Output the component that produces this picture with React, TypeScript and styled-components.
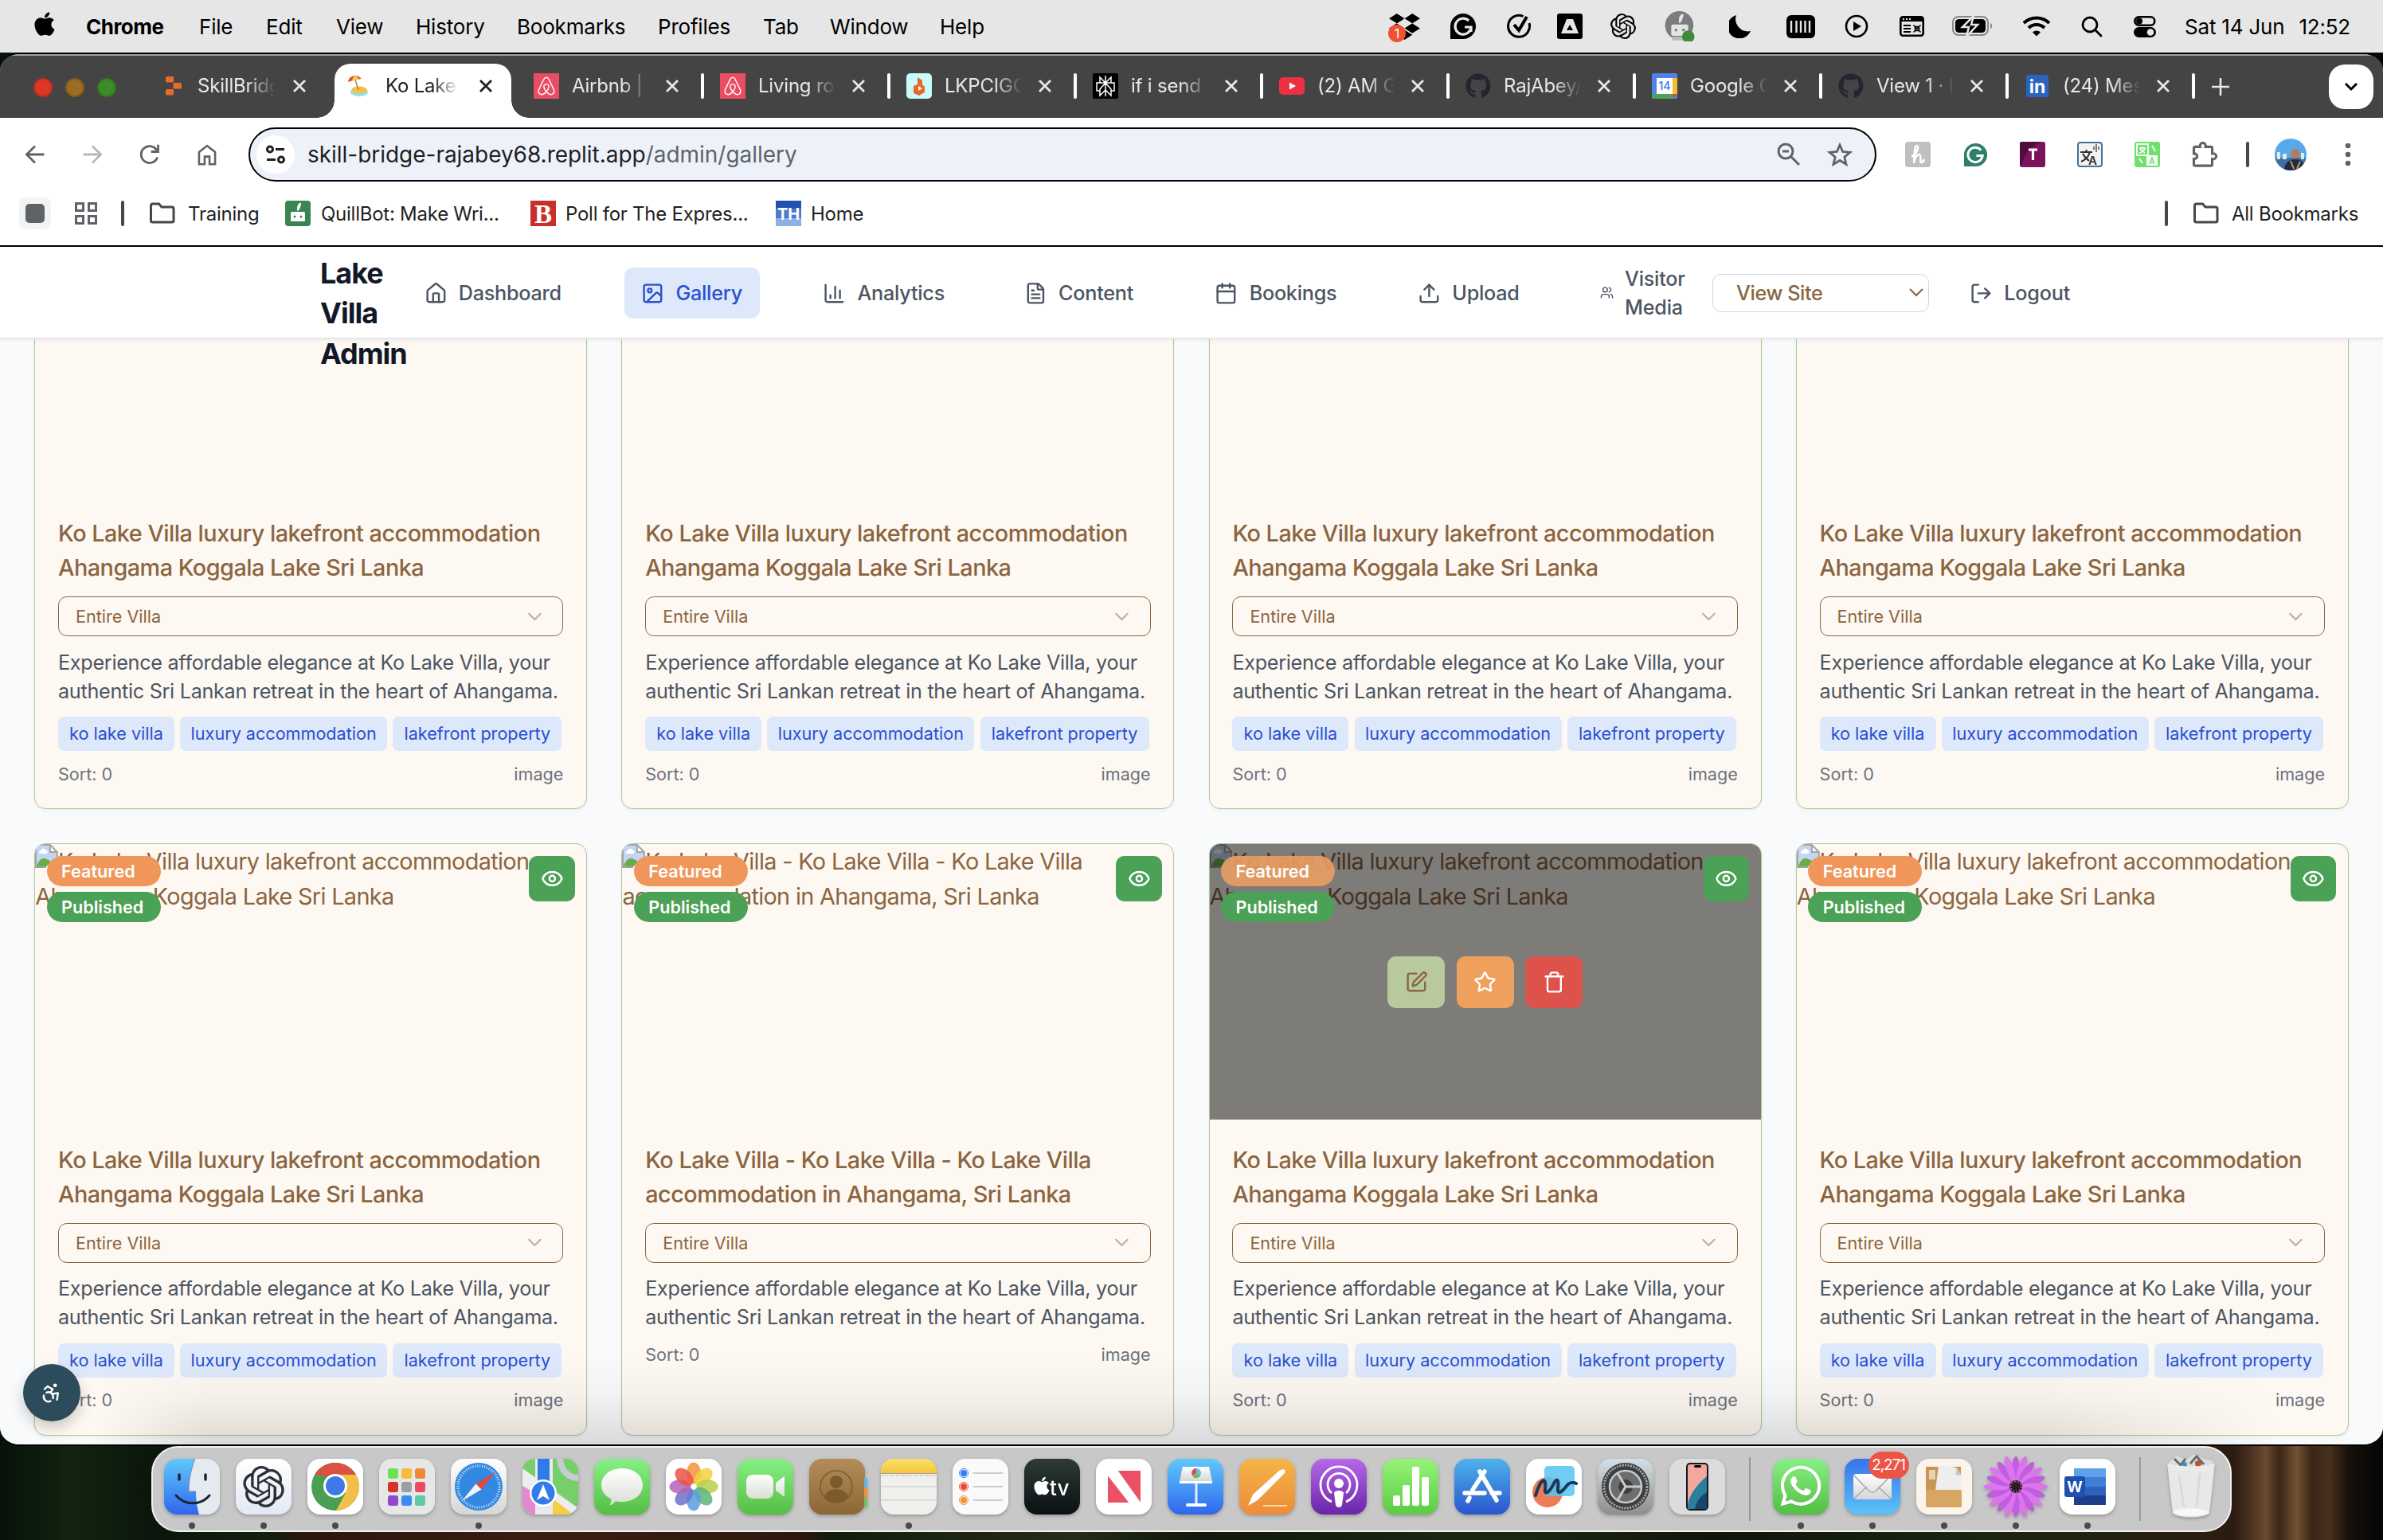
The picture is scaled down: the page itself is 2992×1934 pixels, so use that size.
import React from 'react';
import styled, { createGlobalStyle, css } from 'styled-components';
import {
  House, Image, ChartColumn, FileText, Calendar, Upload, Users, LogOut,
  SquarePen, Star, Trash, Eye, ChevronDown, Accessibility,
} from 'lucide-react';
import { FaApple, FaDropbox, FaAirbnb, FaGithub, FaWhatsapp } from 'react-icons/fa';

const Global = createGlobalStyle`
  * { box-sizing: border-box; }
  body { margin: 0; font-family: Inter, "Liberation Sans", sans-serif; }
`;

/* ---------- desktop ---------- */

const Desktop = styled.div`
  width: 2992px;
  height: 1934px;
  overflow: hidden;
  display: flex;
  flex-direction: column;
  background:
    linear-gradient(90deg, transparent 2780px, #2b1b10 2805px, #4a3020 2825px, #6b4a30 2845px, #3b2618 2862px, #755233 2884px, #3a2617 2902px, #46301d 2925px, #15100a 2950px, #050505 2992px),
    linear-gradient(90deg, #07110a 0, #12240f 90px, #0b160c 190px, #14200f 350px, #2c170d 380px, #3a1e12 700px, #2e180d 1010px, #121c0c 1040px, #232d18 1350px, #10190b 1500px, #1d2814 1900px, #0e160a 2150px, #1a2512 2500px, #2a1d10 2780px);
`;

const MenuBar = styled.div`
  flex: none;
  height: 66px;
  display: flex;
  align-items: center;
  padding: 0 34px 0 39px;
  background: #e6e6e6;
  color: #000;
  font-size: 26px;
  white-space: nowrap;
`;

const AppleMark = styled.div`
  width: 69px;
  font-size: 34px;
  height: 40px;
`;

const MenuItem = styled.div<{ $w: number; $bold?: boolean }>`
  width: ${(p) => p.$w}px;
  font-weight: ${(p) => (p.$bold ? 700 : 400)};
  letter-spacing: ${(p) => (p.$bold ? '-0.5px' : '-0.2px')};
`;

const Status = styled.div`
  margin-left: auto;
  display: flex;
  align-items: center;
`;

const StatusSlot = styled.div<{ $gap: number }>`
  width: 40px;
  height: 40px;
  margin-left: ${(p) => p.$gap}px;
  display: flex;
  align-items: center;
  justify-content: center;
  position: relative;
  svg { flex: none; }
`;

const DropBadge = styled.span`
  position: absolute;
  left: 0;
  top: 18px;
  width: 22px;
  height: 22px;
  border-radius: 50%;
  background: #ee5233;
  color: #fff;
  font-size: 16px;
  line-height: 22px;
  text-align: center;
`;

const Clock = styled.div`
  width: 215px;
  margin-left: 30px;
  display: flex;
  gap: 18px;
  letter-spacing: -0.2px;
`;

/* ---------- browser chrome ---------- */

const Window = styled.div`
  flex: none;
  height: 1750px;
  border-top: 2px solid #000;
  border-bottom: 2px solid #000;
  border-radius: 24px;
  overflow: hidden;
  display: flex;
  flex-direction: column;
  position: relative;
  background: #fff;
`;

const TabStrip = styled.div`
  flex: none;
  height: 80px;
  border-top: 2px solid #a3a39f;
  background: #444;
  display: flex;
  align-items: center;
  padding-left: 42px;
`;

const Lights = styled.div`
  display: flex;
  gap: 16px;
  width: 138px;
  padding-top: 2px;
`;

const Light = styled.span<{ $c: string; $b: string }>`
  width: 24px;
  height: 24px;
  border-radius: 50%;
  background: ${(p) => p.$c};
  border: 2px solid ${(p) => p.$b};
`;

const TabBox = styled.div<{ $w: number; $active?: boolean; $line?: boolean }>`
  width: ${(p) => p.$w}px;
  height: 68px;
  margin-top: 10px;
  padding: 0 0 12px 22px;
  display: flex;
  align-items: center;
  position: relative;
  color: #e8e8e8;
  ${(p) => p.$line && css`
    &::after {
      content: '';
      position: absolute;
      right: -2px;
      top: 12px;
      width: 4px;
      height: 32px;
      border-radius: 2px;
      background: #fff;
    }
  `}
  ${(p) => p.$active && css`
    margin: 10px 6px 0 6px;
    padding-left: 14px;
    background: #fff;
    color: #1f1f1f;
    border-radius: 20px 20px 0 0;
    &::before, &::after {
      content: '';
      position: absolute;
      bottom: 0;
      width: 22px;
      height: 22px;
    }
    &::before { left: -22px; background: radial-gradient(circle at 0 0, transparent 21.5px, #fff 22px); }
    &::after { right: -22px; background: radial-gradient(circle at 100% 0, transparent 21.5px, #fff 22px); }
  `}
`;

const Favicon = styled.div<{ $bg?: string; $r?: number; $c?: string }>`
  flex: none;
  width: 32px;
  height: 32px;
  display: flex;
  align-items: center;
  justify-content: center;
  background: ${(p) => p.$bg || 'transparent'};
  border-radius: ${(p) => p.$r || 0}px;
  color: ${(p) => p.$c || '#fff'};
  font-size: 26px;
`;

const TabText = styled.div<{ $ml?: number; $w?: number }>`
  width: ${(p) => p.$w || 94}px;
  margin-left: ${(p) => p.$ml ?? 16}px;
  overflow: hidden;
  white-space: nowrap;
  font-size: 24px;
  line-height: 34px;
  letter-spacing: -0.2px;
  mask-image: linear-gradient(90deg, #000 65%, transparent 102%);
`;

const Close = styled.svg<{ $mr: number }>`
  flex: none;
  width: 18px;
  height: 18px;
  margin-left: auto;
  margin-right: ${(p) => p.$mr}px;
`;

const NewTab = styled.div`
  width: 68px;
  display: flex;
  justify-content: center;
`;

const TabMenu = styled.div`
  width: 56px;
  height: 56px;
  margin-left: auto;
  margin-right: 12px;
  border-radius: 20px;
  background: #fff;
  display: flex;
  align-items: center;
  justify-content: center;
`;

const Toolbar = styled.div`
  flex: none;
  height: 80px;
  padding: 12px 0 0 8px;
  display: flex;
  align-items: center;
  background: #fff;
`;

const ToolSlot = styled.div<{ $w?: number }>`
  flex: none;
  width: ${(p) => p.$w || 72}px;
  display: flex;
  align-items: center;
  justify-content: center;
`;

const UrlBar = styled.div`
  flex: none;
  width: 2044px;
  height: 68px;
  margin: 0 16px 0;
  border: 2px solid #000;
  border-radius: 34px;
  background: #edf2fa;
  display: flex;
  align-items: center;
  padding: 0 12px 0 8px;
`;

const SiteInfo = styled.div`
  width: 48px;
  height: 48px;
  border-radius: 50%;
  background: #fff;
  display: flex;
  align-items: center;
  justify-content: center;
  margin-right: 16px;
`;

const UrlText = styled.div`
  flex: 1;
  font-size: 28px;
  letter-spacing: -0.03px;
  color: #1f1f1f;
  span { color: #5f6368; }
`;

const Avatar = styled.div`
  width: 40px;
  height: 40px;
  border-radius: 50%;
  overflow: hidden;
`;

const VLine = styled.i`
  width: 4px;
  height: 32px;
  border-radius: 2px;
  background: #474747;
`;

const BookmarkBar = styled.div`
  flex: none;
  height: 82px;
  border-bottom: 2px solid #000;
  display: flex;
  align-items: center;
  padding: 0 30px 0 24px;
  color: #1f1f1f;
  font-size: 24px;
  white-space: nowrap;
`;

const SquareButton = styled.div`
  width: 40px;
  height: 40px;
  border-radius: 8px;
  background: #f1f3f4;
  padding: 8px;
  &::before {
    content: '';
    display: block;
    width: 24px;
    height: 24px;
    border-radius: 5px;
    background: #5f6368;
  }
`;

const Bookmark = styled.div<{ $w: number; $gap?: number }>`
  width: ${(p) => p.$w}px;
  display: flex;
  align-items: center;
  gap: ${(p) => p.$gap || 13}px;
  letter-spacing: -0.25px;
`;

const Spacer = styled.div<{ $w?: number }>`
  flex: ${(p) => (p.$w ? `0 0 ${p.$w}px` : '1')};
`;

/* ---------- page ---------- */

const Viewport = styled.div`
  flex: 1;
  min-height: 0;
  overflow: hidden;
  background: #f9fafc;
`;

const Header = styled.header`
  position: relative;
  z-index: 2;
  height: 116px;
  padding: 2px 0 0 402px;
  background: #fff;
  border-bottom: 2px solid #e5e7eb;
  box-shadow: 0 2px 4px rgba(0, 0, 0, 0.05);
  display: flex;
  align-items: center;
`;

const Brand = styled.div`
  width: 109px;
  height: 100px;
  font-weight: 700;
  font-size: 36px;
  line-height: 50.4px;
  letter-spacing: -1px;
  color: #111827;
`;

const Nav = styled.nav`
  display: flex;
  align-items: center;
  gap: 57.6px;
`;

const NavItem = styled.a<{ $w: number; $active?: boolean }>`
  width: ${(p) => p.$w}px;
  height: 64.8px;
  padding-left: 21.6px;
  border-radius: 10.8px;
  display: flex;
  align-items: center;
  gap: 14.4px;
  font-size: 25.2px;
  line-height: 36px;
  font-weight: 500;
  letter-spacing: -0.25px;
  background: ${(p) => (p.$active ? '#dde8fb' : 'transparent')};
  color: ${(p) => (p.$active ? '#2a4fd0' : '#4b5563')};
  svg { flex: none; }
`;

const SiteSelect = styled.div`
  width: 272px;
  height: 48px;
  margin-left: 19px;
  border: 1.5px solid #d1d5db;
  border-radius: 10.8px;
  display: flex;
  align-items: center;
  justify-content: space-between;
  padding: 0 6px 0 29px;
  font-size: 25.2px;
  font-weight: 500;
  letter-spacing: -0.4px;
  color: #8b6541;
`;

const LogoutLink = styled.div`
  margin-left: 51px;
  display: flex;
  align-items: center;
  gap: 14.4px;
  font-size: 25.2px;
  font-weight: 500;
  letter-spacing: -0.2px;
  color: #4b5563;
`;

const Gallery = styled.main`
  margin-top: -153.4px;
  padding: 0 43.2px;
  display: grid;
  grid-template-columns: repeat(4, 1fr);
  gap: 43.2px;
`;

const Card = styled.article`
  border: 1.5px solid #b0c898;
  border-radius: 14px;
  background: #fdf8f1;
  overflow: hidden;
  box-shadow: 0 2px 4px rgba(0, 0, 0, 0.05);
`;

const Photo = styled.div`
  position: relative;
  height: 345.6px;
  color: #8b6541;
  font-size: 28.8px;
  line-height: 43.2px;
  letter-spacing: -0.65px;
  white-space: nowrap;
  svg { vertical-align: top; }
`;

const Shade = styled.div`
  position: absolute;
  inset: 0;
  background: rgba(0, 0, 0, 0.5);
  display: flex;
  align-items: center;
  justify-content: center;
  gap: 14.4px;
`;

const Action = styled.button<{ $bg: string; $c?: string }>`
  width: 72px;
  height: 64.8px;
  border: 0;
  border-radius: 10.8px;
  background: ${(p) => p.$bg};
  color: ${(p) => p.$c || '#fff'};
  display: flex;
  align-items: center;
  justify-content: center;
  padding: 0;
`;

const Badges = styled.div`
  position: absolute;
  left: 14.4px;
  top: 14.4px;
  width: 143px;
  display: flex;
  flex-direction: column;
  gap: 7.2px;
`;

const Badge = styled.span<{ $bg: string }>`
  height: 38px;
  border-radius: 19px;
  padding-left: 18.5px;
  background: ${(p) => p.$bg};
  color: #fff;
  font-size: 21.6px;
  line-height: 38px;
  font-weight: 600;
  letter-spacing: 0;
`;

const EyeButton = styled.button`
  position: absolute;
  right: 14.4px;
  top: 14.4px;
  width: 57.6px;
  height: 57.6px;
  border: 0;
  padding: 0;
  border-radius: 10.8px;
  background: #4ba155;
  color: #fff;
  display: flex;
  align-items: center;
  justify-content: center;
`;

const Body = styled.div`
  padding: 28.8px;
  display: flex;
  flex-direction: column;
  gap: 14.4px;
`;

const Title = styled.h3`
  margin: 0;
  font-size: 28.8px;
  line-height: 43.2px;
  font-weight: 500;
  letter-spacing: -0.5px;
  color: #8b6541;
  white-space: nowrap;
`;

const Category = styled.div`
  height: 50.4px;
  border: 1.5px solid #8b6541;
  border-radius: 10.8px;
  display: flex;
  align-items: center;
  justify-content: space-between;
  padding: 0 21px;
  font-size: 21.6px;
  color: #8b6541;
  svg { opacity: 0.5; }
`;

const Description = styled.p`
  margin: 0;
  font-size: 25.2px;
  line-height: 36px;
  letter-spacing: -0.29px;
  color: #4b5563;
  white-space: nowrap;
`;

const Tags = styled.div`
  display: flex;
  gap: 7.2px;
`;

const Tag = styled.span<{ $w: number }>`
  width: ${(p) => p.$w}px;
  height: 43.2px;
  border-radius: 7.2px;
  background: #dde8fb;
  color: #2a4fd0;
  font-size: 21.6px;
  line-height: 43.2px;
  text-align: center;
  white-space: nowrap;
`;

const Meta = styled.div`
  display: flex;
  justify-content: space-between;
  font-size: 21.6px;
  line-height: 28.8px;
  color: #6b7280;
`;

const DockGlow = styled.div`
  position: absolute;
  left: 120px;
  right: 130px;
  bottom: 0;
  height: 110px;
  background: linear-gradient(180deg, rgba(0, 0, 0, 0), rgba(0, 0, 0, 0.03) 45%, rgba(0, 0, 0, 0.125));
  mask-image: linear-gradient(90deg, transparent, #000 140px, #000 calc(100% - 300px), transparent);
  z-index: 3;
`;

const A11yButton = styled.div`
  position: absolute;
  left: 28.8px;
  bottom: 28.8px;
  width: 72px;
  height: 72px;
  border-radius: 50%;
  background: #2c4b5b;
  color: #fff;
  display: flex;
  align-items: center;
  justify-content: center;
  box-shadow: 0 8px 18px rgba(0, 0, 0, 0.2);
  z-index: 4;
`;

/* ---------- dock ---------- */

const Dock = styled.div`
  width: 2612px;
  height: 108px;
  margin-left: 190px;
  border: 2.5px solid #f1f1f1;
  border-radius: 34px;
  background: #c8c8c8;
  display: flex;
  padding: 14px 13.5px 0;
`;

const DockSlot = styled.div`
  flex: none;
  width: 70px;
  margin-right: 20px;
  position: relative;
  display: flex;
  flex-direction: column;
  align-items: center;
  svg { overflow: visible; display: block; filter: drop-shadow(0 2px 2px rgba(0, 0, 0, 0.25)); }
`;

const RunningDot = styled.i`
  width: 8px;
  height: 8px;
  margin-top: 10px;
  border-radius: 50%;
  background: #4a4a4a;
`;

const DockLine = styled.div`
  flex: none;
  width: 2px;
  height: 80px;
  margin: -2px 28px 0 10px;
  background: #9a9a9a;
`;

const MailBadge = styled.span`
  position: absolute;
  right: -11px;
  top: -9px;
  width: 51px;
  height: 34px;
  border-radius: 17px;
  background: #ec5545;
  color: #fff;
  font-size: 19px;
  line-height: 34px;
  text-align: center;
  letter-spacing: -1.1px;
`;

const OPENAI = 'M22.2819 9.8211a5.9847 5.9847 0 0 0-.5157-4.9108 6.0462 6.0462 0 0 0-6.5098-2.9A6.0651 6.0651 0 0 0 4.9807 4.1818a5.9847 5.9847 0 0 0-3.9977 2.9 6.0462 6.0462 0 0 0 .7427 7.0966 5.98 5.98 0 0 0 .511 4.9107 6.051 6.051 0 0 0 6.5146 2.9001A5.9847 5.9847 0 0 0 13.2599 24a6.0557 6.0557 0 0 0 5.7718-4.2058 5.9894 5.9894 0 0 0 3.9977-2.9001 6.0557 6.0557 0 0 0-.7475-7.0729zm-9.022 12.6081a4.4755 4.4755 0 0 1-2.8764-1.0408l.1419-.0804 4.7783-2.7582a.7948.7948 0 0 0 .3927-.6813v-6.7369l2.02 1.1686a.071.071 0 0 1 .038.052v5.5826a4.504 4.504 0 0 1-4.4945 4.4944zm-9.6607-4.1254a4.4708 4.4708 0 0 1-.5346-3.0137l.142.0852 4.783 2.7582a.7712.7712 0 0 0 .7806 0l5.8428-3.3685v2.3324a.0804.0804 0 0 1-.0332.0615L9.74 19.9502a4.4992 4.4992 0 0 1-6.1408-1.6464zM2.3408 7.8956a4.485 4.485 0 0 1 2.3655-1.9728V11.6a.7664.7664 0 0 0 .3879.6765l5.8144 3.3543-2.0201 1.1685a.0757.0757 0 0 1-.071 0l-4.8303-2.7865A4.504 4.504 0 0 1 2.3408 7.872zm16.5963 3.8558L13.1038 8.364 15.1192 7.2a.0757.0757 0 0 1 .071 0l4.8303 2.7913a4.4944 4.4944 0 0 1-.6765 8.1042v-5.6772a.79.79 0 0 0-.407-.667zm2.0107-3.0231l-.142-.0852-4.7735-2.7818a.7759.7759 0 0 0-.7854 0L9.409 9.2297V6.8974a.0662.0662 0 0 1 .0284-.0615l4.8303-2.7866a4.4992 4.4992 0 0 1 6.6802 4.66zM8.3065 12.863l-2.02-1.1638a.0804.0804 0 0 1-.038-.0567V6.0742a4.4992 4.4992 0 0 1 7.3757-3.4537l-.142.0805L8.704 5.459a.7948.7948 0 0 0-.3927.6813zm1.0976-2.3654l2.602-1.4998 2.6069 1.4998v2.9994l-2.5974 1.4997-2.6067-1.4997Z';

/* ---------- menu bar icons ---------- */

const Robot = ({ fill, eye }: { fill: string; eye: string }) => (
  <g>
    <path d="M17 4c2-2 3-1 3 0-1 5-2 7-4 9l-1-1c0-3 0-6 2-8z" fill={fill} />
    <rect x="7" y="14" width="18" height="12" rx="1.5" fill={fill} />
    <circle cx="12" cy="20" r="1.5" fill={eye} /><circle cx="20" cy="20" r="1.5" fill={eye} />
  </g>
);

const STATUS: { gap: number; icon: React.ReactNode }[] = [
  { gap: 0, icon: <><FaDropbox size={39} /><DropBadge>1</DropBadge></> },
  { gap: 34, icon: <svg width="32" height="32" viewBox="0 0 32 32"><path d="M16 0a16 16 0 1 1 0 32H0V16A16 16 0 0 1 16 0z" /><path d="M23 9a10 10 0 1 0 3 8h-8M26 17v6" fill="none" stroke="#e6e6e6" strokeWidth="3.2" /></svg> },
  { gap: 30, icon: <svg width="32" height="32" viewBox="0 0 32 32" fill="none" stroke="#000" strokeWidth="3"><path d="M21.500 3.500A13.500 13.500 0 1 0 29 12" /><path d="M10 14l6 7L26 4" strokeWidth="4" /></svg> },
  { gap: 24, icon: <svg width="32" height="32" viewBox="0 0 32 32"><rect width="32" height="32" rx="3" /><path d="M12 7h8l7 18H5z" fill="#e6e6e6" /><path d="M16 14l4 7h-8z" /></svg> },
  { gap: 27, icon: <svg width="32" height="32" viewBox="0 0 24 24"><path d={OPENAI} /></svg> },
  { gap: 31, icon: <svg width="38" height="38" viewBox="0 0 32 32"><circle cx="15.5" cy="15" r="15" fill="#7c7c7c" /><Robot fill="#e4e4e4" eye="#7c7c7c" /><rect x="8" y="27" width="12" height="4" fill="#bbb" /><circle cx="25" cy="27" r="6.6" fill="#3f8a3a" /></svg> },
  { gap: 36, icon: <svg width="28" height="30" viewBox="0 0 28 30"><path d="M9 1A15 15 0 1 0 27 21 15.500 15.500 0 0 1 9 1z" /></svg> },
  { gap: 36, icon: <svg width="36" height="29" viewBox="0 0 36 29"><rect width="36" height="29" rx="6" /><path d="M6 7v15M12.500 7v15M18 7v15M23.500 7v15M29 7v15" stroke="#e6e6e6" strokeWidth="2.400" /></svg> },
  { gap: 30, icon: <svg width="30" height="30" viewBox="0 0 30 30"><circle cx="15" cy="15" r="13" fill="none" stroke="#000" strokeWidth="2.600" /><path d="M11 9l10 6-10 6z" /></svg> },
  { gap: 29, icon: <svg width="31" height="26" viewBox="0 0 31 26"><rect x="1.300" y="1.300" width="28.400" height="23.400" rx="3" fill="none" stroke="#000" strokeWidth="2.600" /><path d="M1 1h29v6H1z" /><path d="M4 4h2M8 4h2M12 4h2" stroke="#e6e6e6" strokeWidth="2" /><path d="M5 12h9M5 16h9M5 20h9" stroke="#000" strokeWidth="2" /><path d="M19.500 13.500h5v5h-5zM17.500 11.500l9 9M26.500 11.500l-9 9" fill="none" stroke="#000" strokeWidth="1.500" /></svg> },
  { gap: 36, icon: <svg width="51" height="26" viewBox="0 0 51 26"><rect x="1" y="1" width="44" height="23" rx="7" fill="none" stroke="#888" strokeWidth="2" /><path d="M48 9c3 1 3 6 0 7z" fill="#888" /><rect x="4" y="4" width="38" height="17" rx="4.500" /><path d="M27 0L13 14h8l-3 12 14-15h-8z" stroke="#e6e6e6" strokeWidth="2.500" /></svg> },
  { gap: 41, icon: <svg width="36" height="26" viewBox="0 0 36 26" fill="none" stroke="#000" strokeWidth="4.200"><path d="M2 9a23 23 0 0 1 32 0M8 15a14.500 14.500 0 0 1 20 0" /><path d="M13 20.500a7 7 0 0 1 10 0L18 25.500z" fill="#000" stroke="none" /></svg> },
  { gap: 29, icon: <svg width="27" height="27" viewBox="0 0 27 27" fill="none" stroke="#000" strokeWidth="2.800" strokeLinecap="round"><circle cx="11" cy="11" r="9" /><path d="M17.500 17.500L25 25" /></svg> },
  { gap: 27, icon: <svg width="28" height="27" viewBox="0 0 28 27"><rect x="1.300" y="1.300" width="25" height="10.400" rx="5.200" fill="none" stroke="#000" strokeWidth="2.600" /><circle cx="7" cy="6.500" r="4" /><rect y="14" width="28" height="13" rx="6.500" /><circle cx="21" cy="20.500" r="4.300" fill="#e6e6e6" /></svg> },
];

const MENUS: [string, number][] = [
  ['File', 84], ['Edit', 88], ['View', 100], ['History', 127], ['Bookmarks', 177],
  ['Profiles', 132], ['Tab', 84], ['Window', 138], ['Help', 90],
];

/* ---------- tabs ---------- */

const TABS: { label: string; icon: React.ReactNode; line?: boolean; active?: boolean; w?: number }[] = [
  { label: 'SkillBridge', w: 234, icon: <Favicon><svg width="20" height="24" viewBox="0 0 20 24" fill="#ea6a2c"><rect x="0" y="0" width="10" height="7.500" rx="1.500" /><rect x="9.500" y="8" width="10.500" height="7.500" rx="1.500" /><rect x="0" y="16" width="10" height="7.500" rx="1.500" /></svg></Favicon> },
  { label: 'Ko Lake V', active: true, w: 222, icon: <Favicon><svg width="26" height="28" viewBox="0 0 26 28"><ellipse cx="14" cy="22" rx="11" ry="5" fill="#8fe3ea" /><ellipse cx="14" cy="19" rx="10" ry="4.500" fill="#f3c04a" /><path d="M9 6l4 13" stroke="#b07a3a" strokeWidth="1.500" /><path d="M0 9C1 1 11-2 17 5L9 6z" fill="#e2502d" /><path d="M5 7.500C6 3 8 1 9 1c2 1 4 3 4 4.500z" fill="#f7c948" /></svg></Favicon> },
  { label: 'Airbnb | V', line: true, icon: <Favicon $bg="#ea4c63"><FaAirbnb /></Favicon> },
  { label: 'Living roo', line: true, icon: <Favicon $bg="#ea4c63"><FaAirbnb /></Favicon> },
  { label: 'LKPCIGC', line: true, icon: <Favicon $bg="#c9fbfa" $r={5}><svg width="16" height="24" viewBox="0 0 16 24"><path d="M6 1l6 4v5l3 3v7l-7 4-7-3v-9l5-2z" fill="#e9662c" /><path d="M7 12l5 3-5 3z" fill="#fff" /></svg></Favicon> },
  { label: 'if i send a', line: true, icon: <Favicon $bg="#000" $r={2}><svg width="26" height="28" viewBox="0 0 26 28" fill="none" stroke="#fff" strokeWidth="1.500"><path d="M13 1v26M13 10L6 3v7h14V3zM6 10H2v10h4M20 10h4v10h-4M13 10l-7 8v8l7-7M13 10l7 8v8l-7-7" /></svg></Favicon> },
  { label: '(2) AM Ga', line: true, icon: <Favicon><svg width="32" height="22" viewBox="0 0 32 22"><rect width="32" height="22" rx="5" fill="#ee3142" /><path d="M13 6.500l8 4.500-8 4.500z" fill="#fff" /></svg></Favicon> },
  { label: 'RajAbey/', line: true, icon: <Favicon $c="#22272e"><FaGithub size={32} /></Favicon> },
  { label: 'Google Ca', line: true, icon: <Favicon><svg width="32" height="32" viewBox="0 0 32 32"><rect width="32" height="32" rx="2" fill="#4f83ea" /><path d="M25 6h7v20h-7z" fill="#f4bb2d" /><path d="M0 26h26v6H2a2 2 0 0 1-2-2z" fill="#4ea35b" /><path d="M26 26h6l-6 6z" fill="#dd4a3a" /><rect x="6" y="6" width="20" height="20" fill="#fff" /><text x="16" y="21" fontSize="14" fontWeight="500" fill="#3b73dd" textAnchor="middle">14</text></svg></Favicon> },
  { label: 'View 1 · R', line: true, icon: <Favicon $c="#22272e"><FaGithub size={32} /></Favicon> },
  { label: '(24) Mess', line: true, icon: <Favicon><svg width="28" height="28" viewBox="0 0 28 28"><rect width="28" height="28" rx="2" fill="#2a64bd" /><text x="14" y="23" fontSize="23" fontWeight="700" fill="#fff" textAnchor="middle">in</text></svg></Favicon> },
];

const Tab = ({ t }: { t: (typeof TABS)[number] }) => (
  <TabBox $w={t.w || 234} $active={t.active} $line={t.line}>
    {t.icon}
    <TabText $ml={t.active ? 18 : t.w ? 14 : 16} $w={t.active ? 90 : 96}>{t.label}</TabText>
    <Close $mr={t.active ? 23 : 29} viewBox="0 0 18 18" fill="none" stroke="currentColor" strokeWidth="2.800">
      <path d="M2 2l14 14M16 2L2 16" />
    </Close>
  </TabBox>
);

const Line = ({ d, c = '#5f6368', s = 32, w = 3 }: { d: string; c?: string; s?: number; w?: number }) => (
  <svg width={s} height={s} viewBox="0 0 32 32" fill="none" stroke={c} strokeWidth={w}><path d={d} /></svg>
);

const FOLDER = 'M1.500 6a2 2 0 0 1 2-2h8l3.500 4H28a2 2 0 0 1 2 2v15a2 2 0 0 1-2 2H3.500a2 2 0 0 1-2-2z';

/* ---------- gallery ---------- */

interface Item { title: [string, string]; tags?: boolean; hover?: boolean }

const LUXURY: Item = {
  title: ['Ko Lake Villa luxury lakefront accommodation', 'Ahangama Koggala Lake Sri Lanka'],
  tags: true,
};

const ITEMS: Item[] = [
  LUXURY, LUXURY, LUXURY, LUXURY,
  LUXURY,
  { title: ['Ko Lake Villa - Ko Lake Villa - Ko Lake Villa', 'accommodation in Ahangama, Sri Lanka'] },
  { ...LUXURY, hover: true },
  LUXURY,
];

const BrokenImage = () => (
  <svg width="28.800" height="30" viewBox="0 0 29 30">
    <path d="M1 1h18l9 9v8L14 29H1z" fill="#c5d6f5" />
    <path d="M5 11c0-3 3-3 3-4 3-3 6 0 6 1 3 0 2 4 0 4H6c-1 0-1-1-1-1z" fill="#fff" />
    <path d="M2 28c3-9 8-12 13-9 3 1 4 2 5 4l-6 5z" fill="#6aae48" />
    <path d="M19 1v9h9z" fill="#fff" />
    <path d="M14 29H1V1h18l9 9v7M19 1v9h9" fill="none" stroke="#a3a3a3" strokeWidth="2" />
  </svg>
);

const GalleryCard = ({ item }: { item: Item }) => (
  <Card>
    <Photo>
      <BrokenImage />{item.title[0]}<br />{item.title[1]}
      {item.hover && (
        <Shade>
          <Action $bg="#b7c99d" $c="#8b6541"><SquarePen size={28.8} /></Action>
          <Action $bg="#f0a05d"><Star size={28.8} /></Action>
          <Action $bg="#de524c"><Trash size={28.8} /></Action>
        </Shade>
      )}
      <Badges>
        <Badge $bg={item.hover ? 'rgba(232, 156, 98, 0.92)' : '#f0965b'}>Featured</Badge>
        <Badge $bg="#4ba155">Published</Badge>
      </Badges>
      <EyeButton><Eye size={28.8} /></EyeButton>
    </Photo>
    <Body>
      <Title>{item.title[0]}<br />{item.title[1]}</Title>
      <Category>Entire Villa<ChevronDown size={28.8} strokeWidth={1.8} /></Category>
      <Description>
        Experience affordable elegance at Ko Lake Villa, your<br />
        authentic Sri Lankan retreat in the heart of Ahangama.
      </Description>
      {item.tags && (
        <Tags>
          <Tag $w={146}>ko lake villa</Tag>
          <Tag $w={260}>luxury accommodation</Tag>
          <Tag $w={212}>lakefront property</Tag>
        </Tags>
      )}
      <Meta><span>Sort: 0</span><span>image</span></Meta>
    </Body>
  </Card>
);

/* ---------- dock icons ---------- */

const Tile = ({ fill, children }: { fill: string; children?: React.ReactNode }) => (
  <svg width="70" height="70" viewBox="0 0 70 70">
    <rect width="70" height="70" rx="16" fill={fill} />
    {children}
  </svg>
);

const DefsHolder = styled.svg`
  position: absolute;
`;

const Gradients = () => (
  <DefsHolder width="0" height="0">
    <defs>
      {([
        ['gBlue', '#5fc9fa', '#3066ee'], ['gGreen', '#86f084', '#55be44'], ['gPaper', '#ffffff', '#e2e8f4'],
        ['gBlack', '#2c3a35', '#0c1013'], ['gOrange', '#f4b548', '#ee8b39'], ['gPurple', '#b868ea', '#6a25a8'],
        ['gLime', '#96f377', '#5ccb45'], ['gStore', '#4db2ea', '#2956cf'], ['gSteel', '#d3e0e8', '#8f8d89'],
        ['gMail', '#3a72ec', '#5bc3f8'], ['gBrown', '#b38d58', '#8c6635'], ['gWhite', '#ffffff', '#d9ded3'],
        ['gGrey', '#ffffff', '#d6d6d6'], ['gNote', '#fbde6b', '#f4c63a'],
      ] as [string, string, string][]).map(([id, a, b]) => (
        <linearGradient key={id} id={id} x1="0" y1="0" x2="0" y2="1">
          <stop offset="0" stopColor={a} /><stop offset="1" stopColor={b} />
        </linearGradient>
      ))}
      <clipPath id="tileClip"><rect width="70" height="70" rx="16" /></clipPath>
    </defs>
  </DefsHolder>
);

const petals = ['#f2933a', '#f3d13c', '#b5cf4a', '#5cb678', '#5b9fe0', '#6f72c9', '#b562b8', '#ea5445'];
const padColors = ['#6fe052', '#f6bd3d', '#ee8a35', '#d4342a', '#9a9fa3', '#ec4a63', '#9147cf', '#378df5', '#5fc8a4'];

const DOCK: { icon: React.ReactNode; dot?: boolean; line?: boolean; badge?: string }[] = [
  { dot: true, icon: <Tile fill="#e5eaf0"><g clipPath="url(#tileClip)"><path d="M0 0h39c-5 13-8 26-8 41h9c0 10 1 19 4 29H0z" fill="url(#gBlue)" /></g><path d="M39 0c-5 13-8 26-8 41h9" fill="none" stroke="#7b8da5" strokeWidth="1" /><path d="M19 20v6M52 20v6" stroke="#1d2733" strokeWidth="3.500" strokeLinecap="round" /><path d="M15 46c11 13 31 13 42 0" fill="none" stroke="#1d2733" strokeWidth="3" strokeLinecap="round" /></Tile> },
  { dot: true, icon: <Tile fill="url(#gPaper)"><path d={OPENAI} transform="translate(9 9) scale(2.170)" fill="#2b2f36" /></Tile> },
  { dot: true, icon: <Tile fill="#fff"><circle cx="35" cy="35" r="30" fill="#4a9f52" /><path d="M35 35L9 20A30 30 0 0 1 61 20z" fill="#db5142" /><path d="M35 20h26a30 30 0 0 1-25 45l12-22z" fill="#f2c04a" /><path d="M9 20l13 23 8-20z" fill="#4a9f52" /><circle cx="35" cy="34" r="15" fill="#fff" /><circle cx="35" cy="34" r="12" fill="#4178e8" /></Tile> },
  { icon: <Tile fill="#e6e8e8">{padColors.map((c, i) => <rect key={c} x={11 + (i % 3) * 17} y={12 + Math.floor(i / 3) * 17} width="13" height="13" rx="3" fill={c} />)}</Tile> },
  { dot: true, icon: <Tile fill="url(#gGrey)"><circle cx="35" cy="35" r="30" fill="#3389e2" /><circle cx="35" cy="35" r="26" fill="none" stroke="#cfe5fb" strokeWidth="3.500" strokeDasharray="1 2" /><path d="M56 17L38.500 38.500l-7-7z" fill="#e0493c" /><path d="M14 53l17.500-21.500 7 7z" fill="#f2f2f2" /></Tile> },
  { icon: <Tile fill="#76cf69"><g clipPath="url(#tileClip)"><path d="M0 12l70 50v8H0z" fill="#ececf1" /><path d="M0 34l24 14v22H0z" fill="#e388d1" /><path d="M38 50l26 20H38z" fill="#f6cd45" /><path d="M16 0h22v70H16z" fill="#e9e9ee" /><path d="M19 0h15v35H19z" fill="#2f7bea" /><path d="M47 0c1 14 10 24 23 24" fill="none" stroke="#c9cbd4" strokeWidth="8" /></g><circle cx="26" cy="43" r="17" fill="#fff" /><circle cx="26" cy="43" r="14.500" fill="#327bea" /><path d="M26 32l8 20-8-5-8 5z" fill="#fff" /></Tile> },
  { icon: <Tile fill="url(#gGreen)"><path d="M35 12c15 0 26 9 26 21S50 54 35 54c-3 0-6 0-8-1-2 3-5 5-8 5 2-2 3-5 2-8C14 47 9 41 9 33c0-12 11-21 26-21z" fill="url(#gWhite)" /></Tile> },
  { icon: <Tile fill="#fff">{petals.map((c, i) => <ellipse key={c} cx="35" cy="18" rx="9" ry="13.500" fill={c} opacity="0.850" transform={`rotate(${i * 45} 35 35)`} />)}</Tile> },
  { icon: <Tile fill="url(#gGreen)"><rect x="11" y="20" width="34" height="30" rx="8" fill="url(#gWhite)" /><path d="M48 30l11-8v26l-11-8z" fill="url(#gWhite)" /></Tile> },
  { icon: <Tile fill="url(#gBrown)"><rect x="69" y="24" width="4" height="12" fill="#5eb4ee" /><rect x="69" y="37" width="4" height="12" fill="#f0923b" /><rect x="69" y="50" width="4" height="10" fill="#6cc65c" /><circle cx="34" cy="35" r="20" fill="none" stroke="#7d5a2d" strokeWidth="1.500" /><circle cx="34" cy="29" r="8" fill="#7d5a2d" /><path d="M19 48c3-13 27-13 30 0-8 9-22 9-30 0z" fill="#7d5a2d" /></Tile> },
  { dot: true, icon: <Tile fill="#f1f0ed"><path d="M0 18C0 6 6 0 16 0h38c10 0 16 6 16 18z" fill="url(#gNote)" /><path d="M0 18.500h70" stroke="#a9a28e" strokeWidth="1.200" /><path d="M0 35h70M0 52h70" stroke="#d5d5d9" strokeWidth="1.500" /><path d="M1 21h68" stroke="#b5b5b5" strokeWidth="1.500" strokeDasharray="1.500 1.500" /></Tile> },
  { icon: <Tile fill="#fbfafa">{['#347bf5', '#e84a3b', '#ef9534'].map((c, i) => <g key={c}><circle cx="14" cy={18 + i * 17} r="5.500" fill="none" stroke={c} strokeWidth="1" /><circle cx="14" cy={18 + i * 17} r="4" fill={c} /><path d={`M26 ${18 + i * 17}h37`} stroke="#bcbcc0" strokeWidth="1.500" /></g>)}</Tile> },
  { icon: <Tile fill="url(#gBlack)"><g transform="translate(9 21)"><FaApple size={26} color="#fff" /></g><text x="32" y="46" fontSize="26" fontWeight="500" fill="#fff">tv</text></Tile> },
  { icon: <Tile fill="#fff"><rect x="15" y="15" width="41" height="40" fill="#ec5064" /><path d="M14 14h13l30 42H42L14 20z" fill="#fff" /><path d="M15 15h8L15 22z" fill="#fff" /><path d="M15 15h11L15 30z" fill="#ec5064" opacity="0" /></Tile> },
  { icon: <Tile fill="url(#gBlue)"><path d="M19 10h33l4 18H15z" fill="url(#gGrey)" /><path d="M15 28h41v3H15z" fill="#fff" /><circle cx="36" cy="18" r="6" fill="#66c1e0" /><path d="M36 18v-6a6 6 0 0 0-5 9z" fill="#e24b4b" /><path d="M36 18l5 3a6 6 0 0 1-9 2z" fill="#6bbf4a" /><path d="M36 31v26" stroke="#e8eef8" strokeWidth="3" /><path d="M25 58h22" stroke="#fff" strokeWidth="4" strokeLinecap="round" /></Tile> },
  { icon: <Tile fill="url(#gOrange)"><path d="M30 59h30" stroke="#fbd7a6" strokeWidth="2" /><path d="M11 59l6-14 33-30c5-3 9-2 7 3L23 52z" fill="#fff" /></Tile> },
  { icon: <Tile fill="url(#gPurple)"><g fill="none" stroke="#fff" strokeWidth="2.800"><path d="M26 54a23 23 0 1 1 18 0" /><path d="M26 43a14 14 0 1 1 18 0" /></g><circle cx="35" cy="31" r="6" fill="#fff" /><path d="M29 43c0-4 12-4 12 0l-2 15c-1 4-7 4-8 0z" fill="#fff" /></Tile> },
  { icon: <Tile fill="url(#gLime)">{[[13, 46, 13], [25, 33, 26], [37, 10, 49], [49, 23, 36]].map(([x, y, h]) => <rect key={x} x={x} y={y} width="9" height={h} rx="2" fill="#fff" />)}</Tile> },
  { icon: <Tile fill="url(#gStore)"><g stroke="#fff" strokeWidth="5.500" strokeLinecap="round"><path d="M38 16L23 39M32 16l21 36M13 43h25M47 43h10M19 49l-2 4" /></g></Tile> },
  { icon: <Tile fill="#fff"><circle cx="27" cy="42" r="19" fill="#ef7a56" /><rect x="23" y="9" width="38" height="38" rx="5" fill="#56c4f2" opacity="0.850" /><path d="M12 46c6-20 14-26 12-8-1 10 7 2 12-9 4-6 5 0 4 8-1 9 5 5 11-3 3-4 8-5 12-3" fill="none" stroke="#173a5c" strokeWidth="4" strokeLinecap="round" /></Tile> },
  { icon: <Tile fill="url(#gSteel)"><circle cx="35" cy="35" r="30" fill="#3c3d3f" /><circle cx="35" cy="35" r="27" fill="none" stroke="#a9abad" strokeWidth="3" strokeDasharray="2 1.500" /><circle cx="35" cy="35" r="20" fill="#6b6d6f" stroke="#c8cacb" strokeWidth="2.500" /><circle cx="35" cy="35" r="9" fill="#3c3d3f" /><path d="M35 35h20M35 35L25 18M35 35L25 52" stroke="#c8cacb" strokeWidth="3" /></Tile> },
  { line: true, icon: <Tile fill="#dcdcdc"><rect x="21" y="5" width="28" height="60" rx="5" fill="#151a20" /><rect x="23" y="7" width="24" height="56" rx="3" fill="#f4a79c" /><path d="M47 22C34 32 24 48 23 58v5h24z" fill="#2a7f9d" /><path d="M47 42c-9 5-13 12-15 21h15z" fill="#16456b" /><rect x="31" y="8" width="9" height="3" rx="1.500" fill="#000" /></Tile> },
  { dot: true, icon: <Tile fill="url(#gGreen)"><g transform="translate(6 5)"><FaWhatsapp size={58} color="#fff" /></g></Tile> },
  { dot: true, badge: '2,271', icon: <Tile fill="url(#gMail)"><rect x="11" y="19" width="48" height="32" rx="4" fill="url(#gGrey)" /><path d="M12 21l19 20c3 2 5 2 8 0l19-20M12 50l16-15M58 50L42 35" fill="none" stroke="#a5a8ad" strokeWidth="1.500" /></Tile> },
  { dot: true, icon: <Tile fill="#fbf4ea"><rect x="12" y="10" width="44" height="32" fill="#c89552" /><rect x="16" y="14" width="8" height="12" fill="#e6d3b3" /><path d="M24 40l4-32 22 3 7 10-1 19z" fill="#eee" /><path d="M51 11l-2 9 8 1z" fill="#c9c9c9" /><rect x="12" y="39" width="45" height="22" rx="2" fill="#d6a662" /></Tile> },
  { dot: true, icon: <svg width="70" height="70" viewBox="0 0 70 70">{Array.from({ length: 20 }, (_, i) => <ellipse key={i} cx="35" cy="12" rx="4.600" ry={i % 2 ? 17 : 15} fill={i % 2 ? '#dd74ee' : '#c25ce0'} transform={`rotate(${i * 18} 35 35)`} />)}<circle cx="35" cy="35" r="8" fill="#2e1838" /><circle cx="35" cy="35" r="6.500" fill="none" stroke="#d8a33c" strokeWidth="1.500" strokeDasharray="1.500 2.500" /></svg> },
  { dot: true, line: true, icon: <Tile fill="#fff"><rect x="18" y="12" width="40" height="46" rx="3" fill="#2c63bd" /><path d="M18 12h40v11H18z" fill="#5ca2e8" /><path d="M18 23h40v12H18z" fill="#3f7ed4" /><path d="M18 46h40v12H18z" fill="#1d3f8a" /><rect x="6" y="22" width="26" height="26" rx="3" fill="#1f50b0" /><text x="19" y="42" fontSize="19" fontWeight="700" fill="#fff" textAnchor="middle">W</text></Tile> },
  { icon: <svg width="70" height="70" viewBox="0 0 70 70"><path d="M7 4l10-8 12 5 10-7 12 6 12 3-4 12H9z" fill="#dcdcdc" /><path d="M14 0l8 8 6-8M34 6l8-9 9 10" fill="none" stroke="#6b6b6b" strokeWidth="3" /><circle cx="44" cy="6" r="4" fill="#b55a38" /><circle cx="27" cy="7" r="3" fill="#3b94c4" /><path d="M5 5c8 6 52 6 60 0l-7 63c-5 7-41 7-46 0z" fill="#ececec" opacity="0.940" /><path d="M20 20l6 40M46 18l-4 42" stroke="#dadada" strokeWidth="3" /><ellipse cx="35" cy="67" rx="22" ry="4.500" fill="#f8f8f8" /></svg> },
];

const navIcon = { size: 28.8, strokeWidth: 2 };

export default function App() {
  return (
    <Desktop>
      <Global />
      <Gradients />
      <MenuBar>
        <AppleMark><FaApple /></AppleMark>
        <MenuItem $w={142} $bold>Chrome</MenuItem>
        {MENUS.map(([label, w]) => <MenuItem key={label} $w={w}>{label}</MenuItem>)}
        <Status>
          {STATUS.map((s, i) => <StatusSlot key={i} $gap={s.gap}>{s.icon}</StatusSlot>)}
          <Clock><span>Sat 14 Jun</span><span>12:52</span></Clock>
        </Status>
      </MenuBar>

      <Window>
        <TabStrip>
          <Lights>
            <Light $c="#dd3526" $b="#c42d20" />
            <Light $c="#9a6d22" $b="#86591a" />
            <Light $c="#3c8b26" $b="#2f7a1d" />
          </Lights>
          {TABS.map((t) => <Tab key={t.label} t={t} />)}
          <NewTab>
            <svg width="22" height="22" viewBox="0 0 22 22" stroke="#e8e8e8" strokeWidth="2.600"><path d="M11 0v22M0 11h22" /></svg>
          </NewTab>
          <TabMenu>
            <svg width="18" height="12" viewBox="0 0 18 12" fill="none" stroke="#000" strokeWidth="3"><path d="M2 2l7 7 7-7" /></svg>
          </TabMenu>
        </TabStrip>

        <Toolbar>
          <ToolSlot><Line d="M30 16H4M16 3L3 16l13 13" s={26} w={3.4} /></ToolSlot>
          <ToolSlot><Line d="M2 16h26M16 3l13 13-13 13" s={26} w={3.4} c="#b5b7ba" /></ToolSlot>
          <ToolSlot><Line d="M27 20a12 12 0 1 1-1-10M28 2v10h-10" s={28} w={3.2} /></ToolSlot>
          <ToolSlot><Line d="M4.500 12.500L16 3.500l11.500 9V30h-8V19h-7v11h-8z" s={28} /></ToolSlot>
          <UrlBar>
            <SiteInfo>
              <svg width="26" height="26" viewBox="0 0 26 26" fill="none" stroke="#1f1f1f" strokeWidth="3"><circle cx="6" cy="6.500" r="3.500" /><path d="M13 6.500h11M2 19.500h11" /><circle cx="20" cy="19.500" r="3.500" /></svg>
            </SiteInfo>
            <UrlText>skill-bridge-rajabey68.replit.app<span>/admin/gallery</span></UrlText>
            <ToolSlot $w={64}>
              <svg width="30" height="30" viewBox="0 0 30 30" fill="none" stroke="#5f6368" strokeWidth="3"><circle cx="11" cy="11" r="9" /><path d="M17.500 17.500L28 28M7 11h8" /></svg>
            </ToolSlot>
            <ToolSlot $w={64}>
              <svg width="32" height="32" viewBox="0 0 32 32" fill="none" stroke="#5f6368" strokeWidth="2.800"><path d="M16 4l3.600 8.500 9.200.800-7 6 2.200 9-8-4.800L8 28.300l2.200-9-7-6 9.200-.800z" /></svg>
            </ToolSlot>
          </UrlBar>
          <ToolSlot>
            <Favicon $bg="#bfbfbf" $r={4}><svg width="22" height="26" viewBox="0 0 22 26" fill="none" stroke="#fff" strokeWidth="2.600"><path d="M3 16c6-3 10-12 7-14-4 0-3 13-4 22 1-7 4-11 7-11 3 1 0 10 2 10s3-1 4-4" /></svg></Favicon>
          </ToolSlot>
          <ToolSlot>
            <svg width="31" height="31" viewBox="0 0 32 32"><path d="M16 1a15 15 0 1 1 0 30H1V16A15 15 0 0 1 16 1z" fill="#2f7d6b" /><path d="M23 10a9.500 9.500 0 1 0 2 7h-8" fill="none" stroke="#fff" strokeWidth="3" /></svg>
          </ToolSlot>
          <ToolSlot>
            <svg width="32" height="32" viewBox="0 0 32 32"><rect width="32" height="32" rx="3" fill="#7a1359" /><path d="M0 3a3 3 0 0 1 3-3h24C14 6 4 16 2 31l-2-2z" fill="#4f0d3d" /><path d="M11 10h11M16.500 10v13" stroke="#fff" strokeWidth="3.200" /></svg>
          </ToolSlot>
          <ToolSlot>
            <svg width="32" height="32" viewBox="0 0 32 32"><rect x="1" y="1" width="30" height="30" rx="3" fill="#f3f3f3" stroke="#41719c" strokeWidth="2" /><path d="M4 13h15M11.500 10v3M16 13c-2 6-6 10-11 12M7 15c2 4 5 7 8 9" fill="none" stroke="#333" strokeWidth="2.200" /><text x="14" y="29" fontSize="15" fontWeight="600" fill="#333">A</text><path d="M21 6v4M24 3v10M27 6v4" stroke="#444" strokeWidth="1.400" /></svg>
          </ToolSlot>
          <ToolSlot>
            <svg width="32" height="32" viewBox="0 0 32 32"><rect width="32" height="32" rx="3" fill="#6fdf70" /><rect x="3" y="3" width="14" height="14" fill="none" stroke="#fff" strokeWidth="1.800" /><path d="M6 8h8M10 6v2M13 8c-1 3-3 5-7 6M7 9c2 3 4 4 6 5" fill="none" stroke="#fff" strokeWidth="1.500" /><rect x="15" y="17" width="14" height="13" fill="#fff" /><path d="M19 28l3-8 3 8M20 26h4" fill="none" stroke="#6fdf70" strokeWidth="1.600" /><path d="M22 5l4 7M6 21l4 6" stroke="#fff" strokeWidth="1.800" /></svg>
          </ToolSlot>
          <ToolSlot>
            <Line s={36} d="M4 9a1.500 1.500 0 0 1 1.500-1.500H11c-1-6 7-6 6 0h6A1.500 1.500 0 0 1 24.500 9v6c6-1 6 7 0 6v6a1.500 1.500 0 0 1-1.500 1.500H5.500A1.500 1.500 0 0 1 4 27v-6c5 0 5-6 0-6z" w={2.8} />
          </ToolSlot>
          <ToolSlot $w={36}><VLine /></ToolSlot>
          <ToolSlot>
            <Avatar>
              <svg width="40" height="40" viewBox="0 0 40 40"><rect width="40" height="40" fill="#59a9e8" /><path d="M0 24h40v16H0z" fill="#3f6f9c" /><path d="M3 17h4v9H3zM10 19h5v7h-5zM33 18h4v8h-4z" fill="#dfe9ef" /><circle cx="26" cy="19" r="6" fill="#b07d62" /><path d="M12 40c0-10 7-14 14-14s12 4 12 14z" fill="#1f2b4d" /><path d="M20 28l4 10M32 29l-4 9" stroke="#d49b3a" strokeWidth="2" /></svg>
            </Avatar>
          </ToolSlot>
          <ToolSlot>
            <svg width="8" height="30" viewBox="0 0 8 30" fill="#5f6368"><circle cx="4" cy="4" r="3.300" /><circle cx="4" cy="15" r="3.300" /><circle cx="4" cy="26" r="3.300" /></svg>
          </ToolSlot>
        </Toolbar>

        <BookmarkBar>
          <SquareButton />
          <ToolSlot $w={88}>
            <svg width="28" height="28" viewBox="0 0 28 28" fill="none" stroke="#5f6368" strokeWidth="3"><path d="M1.500 1.500h9v9h-9zM17.500 1.500h9v9h-9zM1.500 17.500h9v9h-9zM17.500 17.500h9v9h-9z" /></svg>
          </ToolSlot>
          <VLine />
          <Spacer $w={32} />
          <Bookmark $w={170} $gap={16}><Line d={FOLDER} c="#474747" />Training</Bookmark>
          <Bookmark $w={308}><Favicon $bg="#3a8550" $r={4}><svg width="32" height="32" viewBox="0 0 32 32"><Robot fill="#fff" eye="#3a8550" /></svg></Favicon>QuillBot: Make Wri...</Bookmark>
          <Bookmark $w={308} $gap={12}><Favicon $bg="#c9302a"><svg width="32" height="32" viewBox="0 0 32 32"><text x="16" y="27.500" fontFamily="Liberation Serif, serif" fontSize="33" fontWeight="700" fill="#fff" textAnchor="middle">B</text></svg></Favicon>Poll for The Expres...</Bookmark>
          <Bookmark $w={200} $gap={12}><Favicon><svg width="32" height="32" viewBox="0 0 32 32"><rect width="32" height="14" fill="#2150ad" /><rect y="14" width="32" height="18" fill="#8fb0e2" /><rect y="10" width="32" height="12" fill="#4c7ccc" /><text x="16" y="24" fontSize="20" fontWeight="700" fill="#fff" textAnchor="middle">TH</text></svg></Favicon>Home</Bookmark>
          <Spacer />
          <VLine />
          <Spacer $w={32} />
          <Bookmark $w={208} $gap={16}><Line d={FOLDER} c="#474747" />All Bookmarks</Bookmark>
        </BookmarkBar>

        <Viewport>
          <Header>
            <Brand>Lake<br />Villa<br />Admin</Brand>
            <Nav>
              <NavItem $w={215}><House {...navIcon} />Dashboard</NavItem>
              <NavItem $w={170.5} $active><Image {...navIcon} />Gallery</NavItem>
              <NavItem $w={195}><ChartColumn {...navIcon} />Analytics</NavItem>
              <NavItem $w={182}><FileText {...navIcon} />Content</NavItem>
              <NavItem $w={197}><Calendar {...navIcon} />Bookings</NavItem>
              <NavItem $w={171}><Upload {...navIcon} />Upload</NavItem>
              <NavItem $w={144}><Users size={17} />Visitor<br />Media</NavItem>
            </Nav>
            <SiteSelect>
              View Site
              <svg width="18" height="12" viewBox="0 0 18 12" fill="none" stroke="#8b6541" strokeWidth="2.200"><path d="M1 1l8 8 8-8" /></svg>
            </SiteSelect>
            <LogoutLink><LogOut {...navIcon} />Logout</LogoutLink>
          </Header>
          <Gallery>
            {ITEMS.map((item, i) => <GalleryCard key={i} item={item} />)}
          </Gallery>
        </Viewport>
        <DockGlow />
        <A11yButton><Accessibility size={28.8} /></A11yButton>
      </Window>

      <Dock>
        {DOCK.map((d, i) => (
          <React.Fragment key={i}>
            <DockSlot>
              {d.icon}
              {d.badge && <MailBadge>{d.badge}</MailBadge>}
              {d.dot && <RunningDot />}
            </DockSlot>
            {d.line && <DockLine />}
          </React.Fragment>
        ))}
      </Dock>
    </Desktop>
  );
}
